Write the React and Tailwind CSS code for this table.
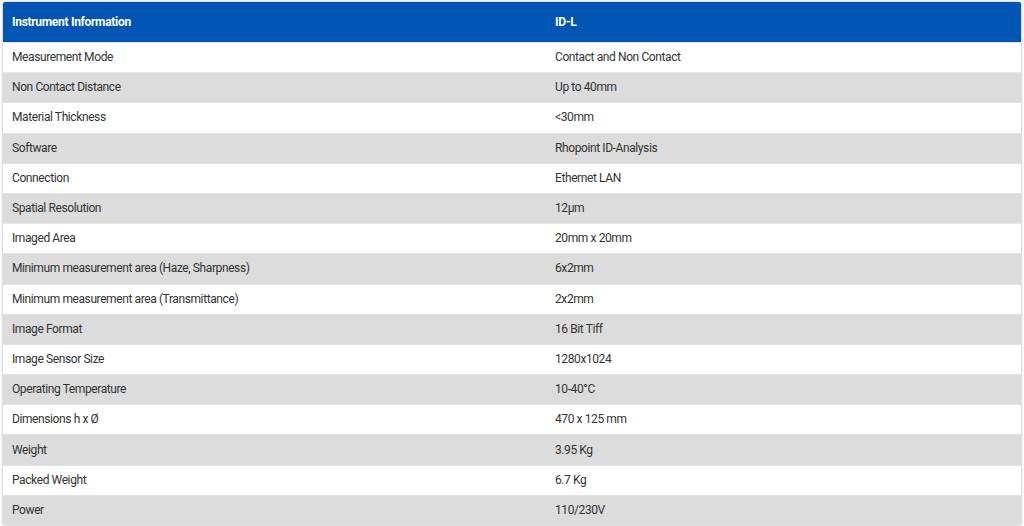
import React from "react";

const rows = [
  ["Measurement Mode", "Contact and Non Contact"],
  ["Non Contact Distance", "Up to 40mm"],
  ["Material Thickness", "<30mm"],
  ["Software", "Rhopoint ID-Analysis"],
  ["Connection", "Ethernet LAN"],
  ["Spatial Resolution", "12µm"],
  ["Imaged Area", "20mm x 20mm"],
  ["Minimum measurement area (Haze, Sharpness)", "6x2mm"],
  ["Minimum measurement area (Transmittance)", "2x2mm"],
  ["Image Format", "16 Bit Tiff"],
  ["Image Sensor Size", "1280x1024"],
  ["Operating Temperature", "10-40°C"],
  ["Dimensions h x Ø", "470 x 125 mm"],
  ["Weight", "3.95 Kg"],
  ["Packed Weight", "6.7 Kg"],
  ["Power", "110/230V"],
];

export default function App() {
  return (
    <div className="w-[1024px] h-[526px] bg-white overflow-hidden pt-[2px] pl-[3px]" style={{ fontFamily: "Roboto, 'Liberation Sans', sans-serif" }}>
      <div className="w-[1018px] shadow-[0_0_3px_rgba(0,0,0,0.35)] rounded-[2px] overflow-hidden">
        <div className="grid grid-cols-[543px_1fr] h-[40px] items-center bg-[#0055b2] text-white text-[12px] font-bold tracking-[-0.3px]">
          <div className="pl-[9px]">Instrument Information</div>
          <div className="pl-[9px]">ID-L</div>
        </div>
        {rows.map(([k, v], i) => (
          <div
            key={i}
            className={
              i % 2 === 0
                ? "grid grid-cols-[543px_1fr] h-[30.2px] items-center pb-[1px] bg-white text-[#333] text-[12px] tracking-[-0.4px] border-t border-[#e4e4e4]"
                : "grid grid-cols-[543px_1fr] h-[30.2px] items-center pb-[1px] bg-[#dcdcdc] text-[#333] text-[12px] tracking-[-0.4px] border-t border-[#e4e4e4]"
            }
          >
            <div className="pl-[9px]">{k}</div>
            <div className="pl-[9px]">{v}</div>
          </div>
        ))}
      </div>
    </div>
  );
}
